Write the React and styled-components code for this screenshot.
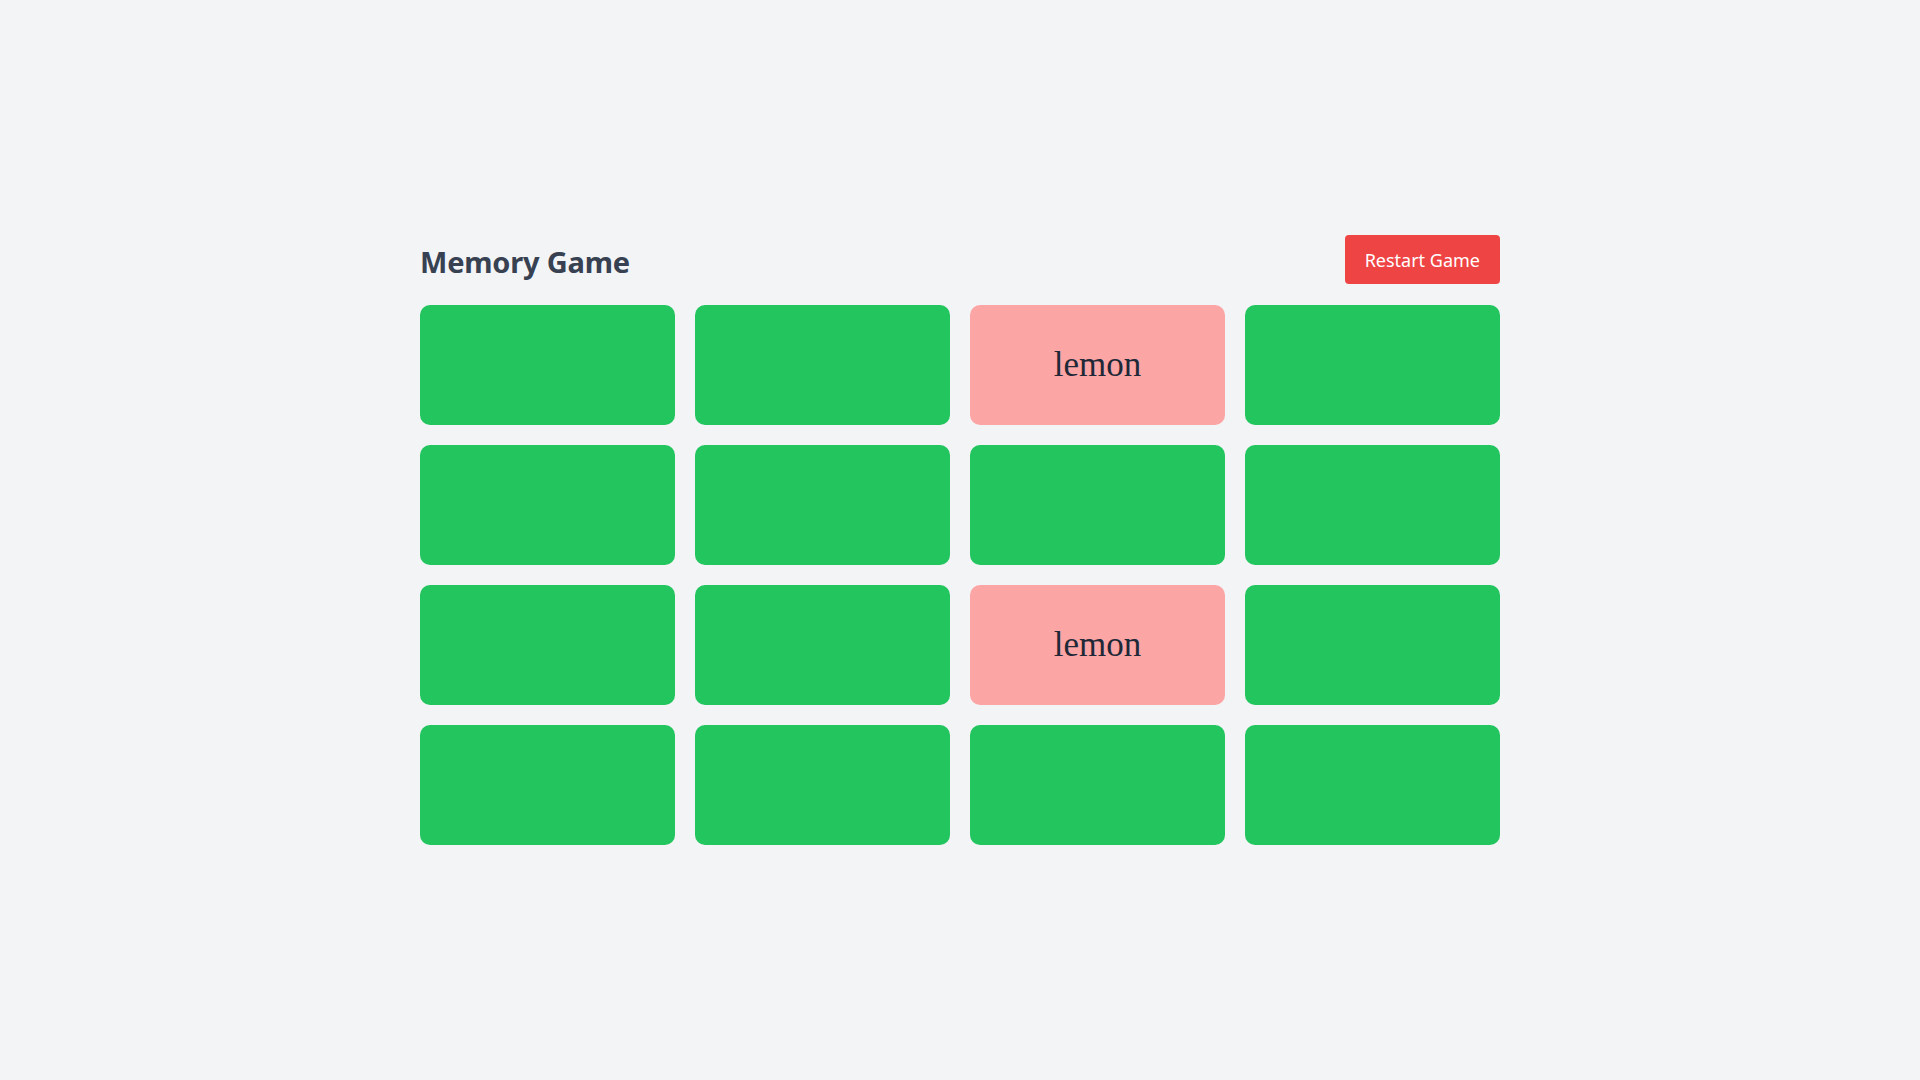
import React from "react";
import styled, { createGlobalStyle } from "styled-components";

const GlobalStyle = createGlobalStyle`
	* {
		box-sizing: border-box;
	}
	body {
		margin: 0;
		background: #f3f4f6;
		font-family: "Noto Sans", "Open Sans", sans-serif;
	}
`;

const cards = [
	null, null, "lemon", null,
	null, null, null, null,
	null, null, "lemon", null,
	null, null, null, null,
];

function App() {
	return (
		<>
			<GlobalStyle />
			<Page>
				<Board>
					<Header>
						<Title>Memory Game</Title>
						<RestartBtn>Restart Game</RestartBtn>
					</Header>
					<Grid>
						{cards.map((c, i) => (
							<Card key={i} flipped={!!c}>
								{c}
							</Card>
						))}
					</Grid>
				</Board>
			</Page>
		</>
	);
}

export default App;

const Page = styled.div`
	min-height: 100vh;
	display: flex;
	align-items: center;
	justify-content: center;
`;

const Board = styled.div`
	width: 1080px;
	display: flex;
	flex-direction: column;
	gap: 21px;
`;

const Header = styled.div`
	display: flex;
	align-items: center;
	justify-content: space-between;
`;

const Title = styled.h1`
	margin: 0;
	font-size: 29px;
	font-weight: 700;
	color: #374151;
	padding-top: 4px;
	letter-spacing: -0.2px;
`;

const RestartBtn = styled.button`
	height: 49px;
	padding: 0 20px;
	border: none;
	border-radius: 4px;
	background: #ef4444;
	color: #fff;
	font-family: "Noto Sans", "Open Sans", sans-serif;
	font-size: 18px;
	cursor: pointer;
`;

const Grid = styled.div`
	display: grid;
	grid-template-columns: repeat(4, 1fr);
	gap: 20px;
`;

const Card = styled.div`
	height: 120px;
	border-radius: 10px;
	background: ${(props) => (props.flipped ? "#fca5a5" : "#22c55e")};
	display: flex;
	align-items: center;
	justify-content: center;
	font-family: "Liberation Serif", "Times New Roman", serif;
	font-size: 35px;
	color: #1f2937;
	cursor: pointer;
`;
